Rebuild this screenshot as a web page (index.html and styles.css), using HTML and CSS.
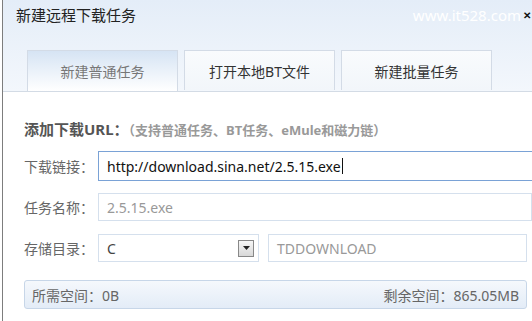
FILE: index.html
```html
<!DOCTYPE html>
<html lang="zh-CN">
<head>
    <meta charset="UTF-8">
    <title>新建远程下载任务</title>
    <link rel="stylesheet" href="styles.css">
</head>
<body>

<div class="window">
    <div class="header">
        <div class="title-bar">
            <span class="title">新建远程下载任务</span>
            <span class="watermark">www.it528.com</span>
            <span class="close">✕</span>
        </div>
        <div class="tabs">
            <div class="tab active">新建普通任务</div>
            <div class="tab">打开本地BT文件</div>
            <div class="tab">新建批量任务</div>
        </div>
    </div>

    <div class="content">
        <div class="section-title">添加下载URL：<span class="hint">（支持普通任务、BT任务、eMule和磁力链）</span></div>

        <div class="row">
            <label class="label">下载链接：</label>
            <div class="field focus"><span>http://download.sina.net/2.5.15.exe</span><span class="caret"></span></div>
        </div>

        <div class="row">
            <label class="label">任务名称：</label>
            <div class="field muted">2.5.15.exe</div>
        </div>

        <div class="row">
            <label class="label">存储目录：</label>
            <div class="select">
                <span>C</span>
                <span class="arrow"><svg width="7" height="4" viewBox="0 0 7 4"><path d="M0 0h7L3.5 4z" fill="#222"/></svg></span>
            </div>
            <div class="field muted dir">TDDOWNLOAD</div>
        </div>

        <div class="status">
            <span>所需空间：0B</span>
            <span>剩余空间：865.05MB</span>
        </div>
    </div>
</div>

</body>
</html>
```

FILE: styles.css
```css
html, body {
    margin: 0;
    padding: 0;
    background-color: #fff;
    font-family: "Noto Sans", "Noto Sans CJK SC", sans-serif;
}

.window {
    width: 529px;
    height: 321px;
    margin-left: 2px;
    border-left: 1px solid #7d7d7d;
    overflow: hidden;
}

.header {
    height: 91px;
    background: linear-gradient(to bottom, #e4edf8, #f3f7fc);
    border-bottom: 1px solid #d3dbe5;
    display: flex;
    flex-direction: column;
}

.title-bar {
    display: flex;
    align-items: center;
    height: 30px;
    padding-left: 13px;
    padding-right: 1px;
}

.title {
    font-size: 15px;
    color: #222;
    flex: 1;
}

.watermark {
    font-size: 15px;
    color: #fff;
    margin-right: 2px;
}

.close {
    font-size: 10px;
    font-weight: bold;
    color: #111;
}

.tabs {
    display: flex;
    gap: 6px;
    margin-top: 21px;
    margin-left: 24px;
}

.tab {
    width: 151px;
    height: 40px;
    box-sizing: border-box;
    border: 1px solid #d3dbe6;
    border-bottom: none;
    background: linear-gradient(to bottom, #f9fbfd, #f2f6fa);
    font-size: 14px;
    color: #333;
    display: flex;
    align-items: center;
    justify-content: center;
}

.tab.active {
    height: 41px;
    background: linear-gradient(to bottom, #d6e4f4, #fff);
    color: #777;
}

.content {
    padding-left: 21px;
}

.section-title {
    margin-top: 26px;
    font-size: 15px;
    font-weight: bold;
    color: #555;
}

.hint {
    font-size: 13px;
    color: #999;
}

.row {
    display: flex;
    align-items: center;
    height: 28px;
    margin-top: 13px;
}

.row:first-of-type {
    margin-top: 16px;
}

.label {
    width: 74px;
    font-size: 14px;
    color: #666;
}

.field {
    flex: 1;
    height: 28px;
    box-sizing: border-box;
    border: 1px solid #d5e0ed;
    padding-left: 8px;
    display: flex;
    align-items: center;
    font-size: 14px;
    color: #111;
}

.field.focus {
    border: 1px solid #7aa2d6;
    height: 30px;
    margin-right: -4px;
}

.caret {
    width: 1px;
    height: 16px;
    background-color: #111;
    margin-left: 1px;
}

.field.muted {
    color: #999;
}

.select {
    width: 161px;
    height: 28px;
    box-sizing: border-box;
    border: 1px solid #d5e0ed;
    padding-left: 8px;
    padding-right: 4px;
    display: flex;
    align-items: center;
    justify-content: space-between;
    font-size: 14px;
    color: #444;
}

.arrow {
    width: 16px;
    height: 17px;
    box-sizing: border-box;
    border: 1px solid #888;
    background: linear-gradient(to bottom, #f6f6f6, #d8d8d8);
    display: flex;
    align-items: center;
    justify-content: center;
}

.field.dir {
    margin-left: 9px;
    margin-right: 5px;
}

.status {
    margin-top: 18px;
    margin-right: 5px;
    height: 29px;
    box-sizing: border-box;
    border: 1px solid #c7d6e8;
    border-radius: 3px;
    background: linear-gradient(to bottom, #f5f8fc, #e3ecf7);
    display: flex;
    align-items: center;
    justify-content: space-between;
    padding: 0 7px;
    font-size: 14px;
    color: #666;
}
```
